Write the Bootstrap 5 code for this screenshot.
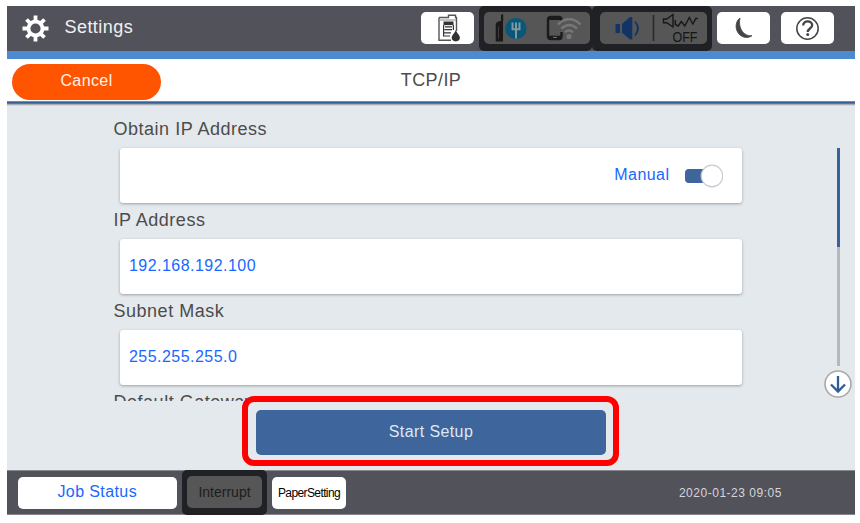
<!DOCTYPE html>
<html lang="en">
<head>
<meta charset="utf-8">
<title>TCP/IP Settings</title>
<link href="https://cdn.jsdelivr.net/npm/bootstrap@5.3.0/dist/css/bootstrap.min.css" rel="stylesheet">
<style>
body{width:860px;height:523px;overflow:hidden;background:#fff;font-family:"Liberation Sans",Arial,sans-serif;font-size:16px;letter-spacing:.4px;line-height:20px;color:#4c4c4c}
.panel{width:848px;height:509px;margin:6px 0 0 7px;background:#e4e9ed}
.topbar,.bottombar{height:45px;background:#52525a}
.topbar{padding-left:15px}
.topbar .title{font-size:18px;letter-spacing:.45px;color:#f1f1f1;margin-left:15.5px;padding-bottom:3px}
.keys{margin-right:21px}
.key{height:32px;border-radius:5px;background:#fff;border:0;padding:0;letter-spacing:inherit}
.icon-key{width:53px;margin-bottom:1px}
.dim{height:45px;background:#202124;border-radius:5px;padding:6px 5px 7px}
.dim .key{background:#565656;width:100%}
.dim-network{width:113px;margin-left:5px;padding-right:2px}
.dim-sound{width:120px;padding-left:8px}
.sleep{margin-left:5px}
.help{margin-left:11px}
.accent{height:8px;background:#4d8bd1}
.heading{height:42px;background:#fff}
.heading>*{width:149px}
.cancel{height:36px;background:#ff5400;color:#fff1e8;border-radius:18px;margin:3px 0 0 5px;letter-spacing:.4px;padding:0 0 2px;border:0;line-height:20px}
.cancel:hover{background:#ff5400;color:#fff1e8}
.heading h1{font-size:18px;line-height:20px;letter-spacing:.4px;color:#4c4c4c;padding-right:5px}
.rule{height:5px;background:linear-gradient(#6d8db5 0 1px,#365f98 1px 2px,#5f7791 2px 3px,#a9acb0 3px 4px,#d3d7db 4px)}
.content-area{height:295px;padding-left:106px;padding-right:3px}
.fields{width:630px;padding-top:13px}
.fields label{display:block;font-size:18px;line-height:20px;height:20px;letter-spacing:.52px;padding-left:.5px}
.field{width:622px;height:55px;margin:9px 0 7px 6.5px;background:#fff;border-radius:3px;box-shadow:0 1px 3px #9a9fa5;color:#1967ff;padding:0 19px 2px 9.5px;letter-spacing:.46px}
.scroller{width:28px;padding-top:42px}
.track{width:3px;height:218px;background:#b8b8b8}
.thumb{width:3px;height:99px;background:#37629b}
.switch-shape{width:39px;height:24px;margin-left:14px;margin-top:2px}
.action-row{height:69px}
.outline-red{width:377px;height:70px;border:6px solid #f00;border-radius:12px;margin:-5px 0 0 235px;padding:8px;background:#e4e9ed;position:relative}
.start{width:350px;height:45px;background:#3e659c;color:#dfe7f2;border:0;border-radius:5px;letter-spacing:.4px;line-height:20px;padding:0 0 2px}
.bottombar{border-top:1px solid #85878b;border-bottom:1px solid #85878b;padding-left:10.5px}
.job{width:159.5px;color:#1967ff;padding-bottom:2px}
.bottombar .dim{margin-left:5px}
.dim .interrupt{width:75px;font-size:14px;letter-spacing:0;color:#1d1d1d}
.paper{width:74px;font-size:12px;letter-spacing:-.6px;color:#000;padding-top:1px;margin-left:5px}
.clock{font-size:12px;letter-spacing:.52px;color:#d5d5d8;margin-right:73px}
svg{display:block}
</style>
<script src="https://cdn.jsdelivr.net/npm/bootstrap@5.3.0/dist/js/bootstrap.bundle.min.js"></script>
</head>
<body>
<main class="panel d-flex flex-column">
  <header class="topbar d-flex align-items-center flex-shrink-0">
    <svg width="27" height="27" viewBox="-13.5 -13.5 27 27" fill="none" stroke="#fff"><circle r="7" stroke-width="3.800"/><path d="M0-13V-8M0 13V8M-13 0H-8M13 0H8M-9-9l3.400 3.400M9 9L5.600 5.600M-9 9l3.400-3.400M9-9L5.600-5.600" stroke-width="3.800"/></svg>
    <span class="title">Settings</span>
    <div class="keys d-flex align-items-center ms-auto">
      <button class="key icon-key" aria-label="Supplies"><svg width="53" height="32" fill="none" stroke="#333"><path d="M18 5.500V28.300H30M18 5.500h9.500v-2.300h7v2.300h1V19" stroke-width="1.400" stroke="#555"/><path d="M18 8h17" stroke="#888"/><path d="M22.500 11.300h10" stroke-width="3.600"/><path d="M22.600 13v11.500M32.400 13v5M24 14.800h7M23.500 17.700h7.500M23 20.800h7M22.500 24h6.500" stroke-width="1.200"/><path d="M34.800 18c-.8 3-4.100 5-4.100 7.600a4.100 3.800 0 0 0 8.200 0c0-2.600-3.300-4.600-4.100-7.600z" fill="#333" stroke="none"/></svg></button>
      <div class="dim dim-network"><button class="key" aria-label="Network"><svg width="106" height="32" fill="none"><path d="M17 2.500h2.200V9H17zM12.500 10.500l3-1.500h3.500v20.500h-7.300V12z" fill="#191919"/><path d="M14.500 14.500v12" stroke="#3c3c3c"/><circle cx="32" cy="16.500" r="10.600" fill="#07577a"/><path d="M28.500 10.500v6.700h7V10.500M32 10.500v6M32 17.500v9" stroke="#82979e" stroke-width="2"/><path d="M77.500 11V8c0-2-1-3-2.500-3H67c-2 0-3 1-3 3v16c0 2 1 3 3 3h8c1.500 0 2.500-1 2.500-3v-4" stroke="#1b1b1b" stroke-width="2.400"/><path d="M64 6.500h13M64 25.300h13" stroke="#1b1b1b" stroke-width="3"/><path d="M69 25.400h4" stroke="#777"/><g stroke="#777" stroke-width="2.500"><path d="M74 12.500c6.500-7 16-7 22.500 0M77.500 16.500c5-4.600 10.500-4.600 15.500 0M81 20.400c2.500-2.300 5.500-2.300 8 0"/></g><circle cx="85" cy="24.500" r="2.600" fill="#777"/></svg></button></div>
      <div class="dim dim-sound"><button class="key" aria-label="Sound"><svg width="107" height="32" fill="none"><path d="M15.500 12h4.500v9h-4.500zM22 12l8-7h2.300v22.500H30l-8-7z" fill="#123464"/><path d="M35 9.500q6 7 0 14" stroke="#123464" stroke-width="1.800"/><path d="M53.500 3v26" stroke="#292929" stroke-width="1.600"/><path d="M63.500 7h3.300l6.200-4.500v12.500l-6.200-4.300h-3.300zM75.300 8v4.500l3 1.500 3-4.500 3.500 4.500 4.500-8.500 3.500 6.500 3-5.500H98" stroke="#171717" stroke-width="1.400"/><text x="72.500" y="29.500" font-family="Liberation Sans,sans-serif" font-size="15" letter-spacing="0" fill="#151515" textLength="25" lengthAdjust="spacingAndGlyphs">OFF</text></svg></button></div>
      <button class="key icon-key sleep" aria-label="Sleep"><svg width="53" height="32"><path d="M23 6C18.500 9 17.500 17 22 22c3.500 4 9 4.500 13 1.700C27 25 20.500 16 23 6z" fill="#444" stroke="#444" stroke-width=".8"/></svg></button>
      <button class="key icon-key help" aria-label="Help"><svg width="53" height="32" fill="none" stroke="#444"><circle cx="26.500" cy="16.500" r="10.700" stroke-width="1.500"/><path d="M22.200 13.500c0-5.600 9-5.300 9-.4 0 3.300-4.500 3.500-4.500 6.900" stroke-width="2.300"/><circle cx="26.700" cy="22.600" r="1.500" fill="#444" stroke="none"/></svg></button>
    </div>
  </header>
  <div class="accent flex-shrink-0"></div>
  <div class="heading d-flex align-items-center justify-content-between flex-shrink-0">
    <button class="btn cancel">Cancel</button>
    <h1 class="m-0 text-center fw-normal">TCP/IP</h1>
    <span></span>
  </div>
  <div class="rule flex-shrink-0"></div>
  <section class="content-area d-flex justify-content-between overflow-hidden flex-shrink-0">
    <div class="fields">
      <label>Obtain IP Address</label>
      <div class="field d-flex align-items-center justify-content-end"><span>Manual</span><svg class="switch-shape" viewBox="0 0 39 24"><rect x="1" y="5" width="32" height="14" rx="4" fill="#3e659c"/><circle cx="28" cy="12" r="10.800" fill="#fff" stroke="#c5cbd3" stroke-width="1.200"/></svg></div>
      <label>IP Address</label>
      <div class="field d-flex align-items-center">192.168.192.100</div>
      <label>Subnet Mask</label>
      <div class="field d-flex align-items-center">255.255.255.0</div>
      <label>Default Gateway</label>
    </div>
    <div class="scroller d-flex flex-column align-items-center">
      <div class="track"><div class="thumb"></div></div>
      <svg class="mt-1 flex-shrink-0" width="28" height="29" viewBox="0 0 28 29" fill="none"><circle cx="14" cy="14" r="13" fill="#fff" stroke="#aaa9a9" stroke-width="1.600"/><path d="M14 6v15.500M7 14.500l7 7 7-7" stroke="#305c98" stroke-width="2.300"/></svg>
    </div>
  </section>
  <div class="action-row flex-shrink-0"><div class="outline-red"><button class="btn start">Start Setup</button></div></div>
  <footer class="bottombar d-flex align-items-center flex-shrink-0">
    <button class="key job">Job Status</button>
    <div class="dim"><button class="key interrupt">Interrupt</button></div>
    <button class="key paper">PaperSetting</button>
    <time class="clock ms-auto">2020-01-23 09:05</time>
  </footer>
</main>
</body>
</html>
